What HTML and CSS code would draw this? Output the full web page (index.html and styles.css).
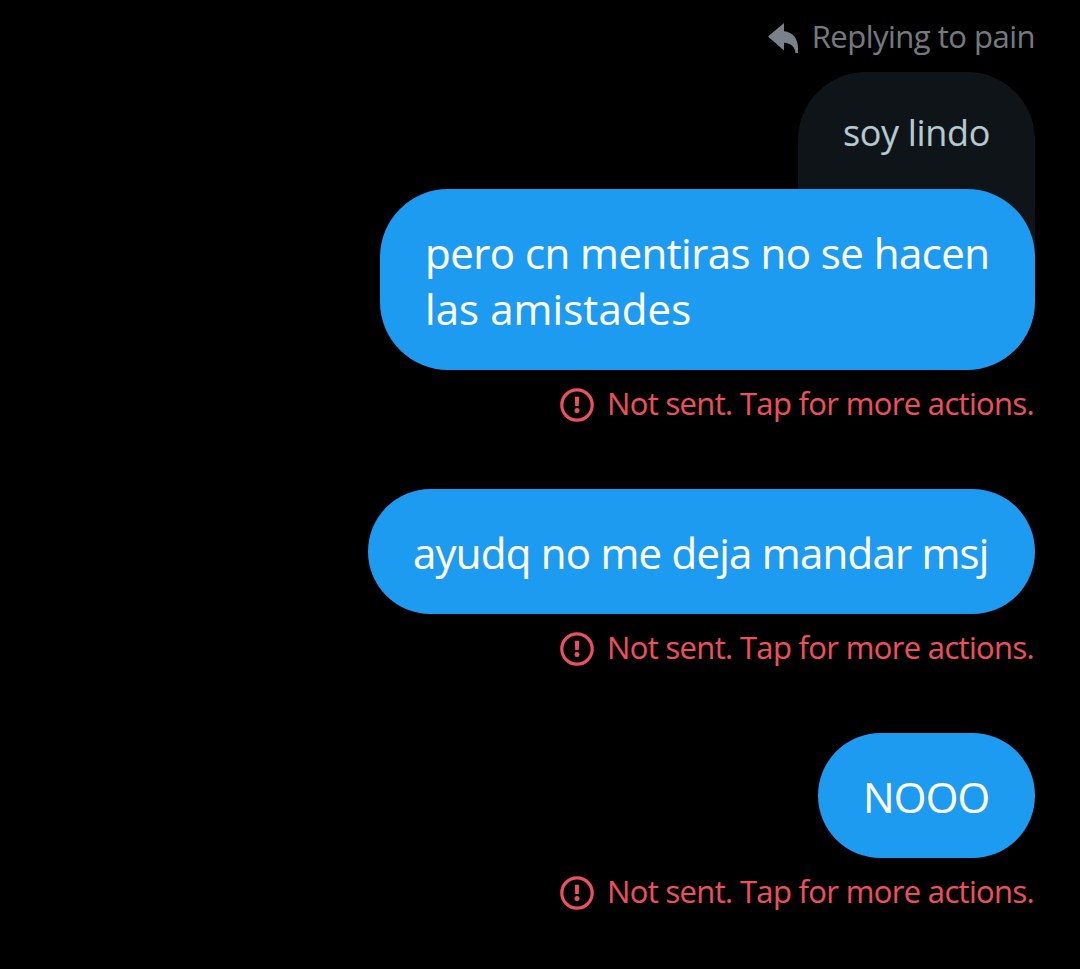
FILE: index.html
```html
<!DOCTYPE html>
<html lang="es">
<head>
<meta charset="utf-8">
<title>Messages</title>
<link rel="stylesheet" href="styles.css">
</head>
<body>
<svg class="defs" width="0" height="0" aria-hidden="true">
  <symbol id="alert" viewBox="0 0 34 34">
    <circle cx="17" cy="17" r="15.2" fill="none" stroke="currentColor" stroke-width="3.2"/>
    <path d="M14.800 8.800h4.400l-.4 9.200h-3.600z" fill="currentColor"/>
    <circle cx="17" cy="22.500" r="2.500" fill="currentColor"/>
  </symbol>
</svg>
<main class="thread">
  <div class="reply-label">
    <svg class="reply-icon" viewBox="0 0 30 30"><path d="M0 13.500 16 0v8.300C25 9 30 16 30 25v5h-2.600C27 24 23 20.300 16 19.800V27.500z" fill="currentColor"/></svg>
    <span class="fit reply-text">Replying to pain</span>
  </div>
  <div class="bubble quoted"><span class="fit quoted-text">soy lindo</span></div>
  <div class="bubble long"><p><span class="fit line-one">pero cn mentiras no se hacen</span><br><span class="fit line-two">las amistades</span></p></div>
  <div class="status"><svg class="alert"><use href="#alert"/></svg><span class="fit status-text">Not sent. Tap for more actions.</span></div>
  <div class="bubble help"><span class="fit help-text">ayudq no me deja mandar msj</span></div>
  <div class="status"><svg class="alert"><use href="#alert"/></svg><span class="fit status-text">Not sent. Tap for more actions.</span></div>
  <div class="bubble no"><span class="fit no-text">NOOO</span></div>
  <div class="status"><svg class="alert"><use href="#alert"/></svg><span class="fit status-text">Not sent. Tap for more actions.</span></div>
</main>
</body>
</html>
```
FILE: styles.css
```css
* { box-sizing: border-box; }
body { margin: 0; background: #000; font-family: "Open Sans", "Noto Sans", sans-serif; }
.defs { display: block; height: 0; }
.thread { height: 969px; padding: 17px 45px 0 0; display: flex; flex-direction: column; align-items: flex-end; overflow: hidden; }
.fit { white-space: nowrap; -webkit-text-stroke: 0.1px currentColor; }
.reply-label { flex: none; height: 40px; margin-bottom: 15px; display: flex; align-items: center; gap: 14px; color: #75797f; font-size: 31px; line-height: 40px; }
.reply-icon { width: 30px; height: 30px; margin-top: 2px; color: #7b818a; }
.reply-text { margin-top: -2px; letter-spacing: -0.5px; }
.bubble { flex: none; display: flex; align-items: center; padding: 2px 45px 0; background: #1d9bf0; color: #fff; font-size: 42px; line-height: 56px; border-radius: 63px; }
.bubble p { margin: 0; }
.quoted { width: 237px; height: 180px; background: #0f1419; color: #b5c9d0; font-size: 36px; line-height: 48px; padding-top: 37px; align-items: flex-start; border-radius: 68px 68px 6px 68px; }
.quoted-text { letter-spacing: -0.35px; }
.long { width: 655px; height: 181px; margin-top: -63px; border-radius: 68px; z-index: 1; }
.line-one { letter-spacing: -0.54px; }
.line-two { letter-spacing: 0.08px; }
.help { width: 667px; height: 125px; }
.help-text { letter-spacing: -0.77px; }
.no { width: 217px; height: 125px; }
.no-text { letter-spacing: -0.8px; }
.status { flex: none; height: 40px; margin: 14px 1px 65px 0; display: flex; align-items: center; gap: 13.5px; color: #ea505e; font-size: 31px; line-height: 40px; }
.status-text { margin-top: -2px; letter-spacing: -0.67px; }
.alert { width: 34px; height: 34px; margin-top: 1px; }
```
